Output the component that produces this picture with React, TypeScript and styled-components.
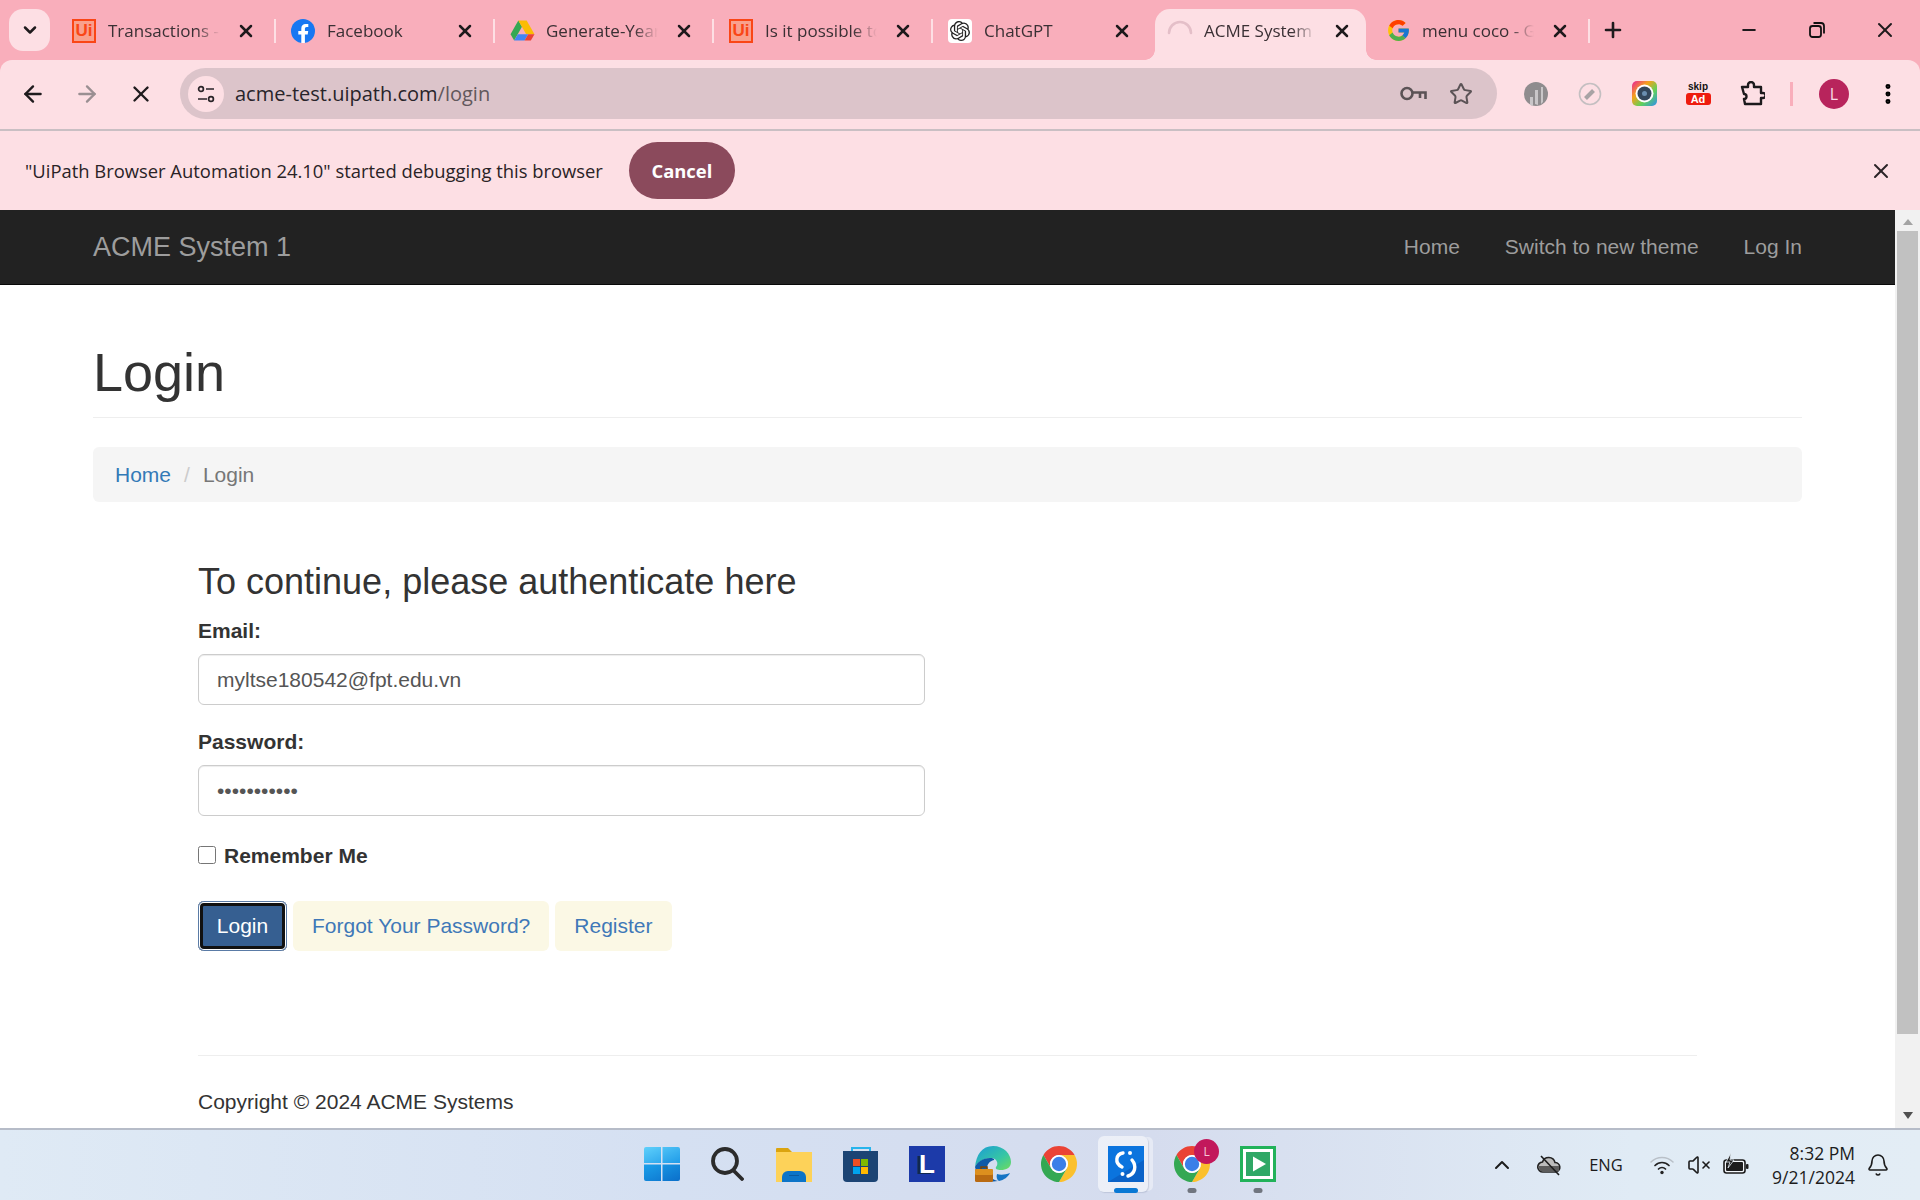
import React from "react";
import styled, { createGlobalStyle } from "styled-components";
import { ArrowLeft, ArrowRight, Bell, ChevronDown, ChevronUp, EllipsisVertical, Minus, Plus, Star, VolumeX, X } from "lucide-react";
import { FcGoogle } from "react-icons/fc";
import { SiOpenai } from "react-icons/si";

const GlobalStyle = createGlobalStyle`
  html, body {
    margin: 0;
    padding: 0;
    background: #fff;
  }
  * {
    box-sizing: border-box;
  }
`;

const UI_FONT = `"Open Sans", "Noto Sans", sans-serif`;
const PAGE_FONT = `"Liberation Sans", Arial, sans-serif`;

function ChromeLogo({ size }: { size: number }) {
  return (
    <svg width={size} height={size} viewBox="4 4 40 40">
      <path fill="#ea4335" d="M6.68 14A20 20 0 0 1 41.32 14H24A10 10 0 0 0 15.34 29Z" />
      <path fill="#fbc02d" d="M24 14H41.32A20 20 0 0 1 24 44L32.66 29A10 10 0 0 0 24 14Z" />
      <path fill="#34a853" d="M6.68 14A20 20 0 0 0 24 44L32.66 29A10 10 0 0 1 15.34 29Z" />
      <circle cx="24" cy="24" r="10" fill="#fff" />
      <circle cx="24" cy="24" r="8" fill="#3b7fe8" />
    </svg>
  );
}

function FacebookLogo() {
  return (
    <svg width="24" height="24" viewBox="0 0 24 24">
      <circle cx="12" cy="12" r="12" fill="#1877f2" />
      <path fill="#fff" d="M16.7 15.4l.5-3.4h-3.3V9.8c0-.9.5-1.8 1.900-1.800h1.500V5.100s-1.300-.2-2.600-.2c-2.700 0-4.400 1.600-4.400 4.600V12h-3v3.400h3V24h3.600v-8.600z" />
    </svg>
  );
}

function DriveLogo() {
  return (
    <svg width="25" height="24" viewBox="0 0 24 22">
      <path fill="#34a853" d="M8 1 0.5 14l3.500 6L11.500 7z" />
      <path fill="#fbbc04" d="M8 1h8l7.500 13h-8z" />
      <path fill="#4285f4" d="M4 20h10l3.500-6H7.500z" />
      <path fill="#ea4335" d="M14 20h6l3.500-6h-6z" />
    </svg>
  );
}

function Spinner() {
  return (
    <svg width="26" height="26" viewBox="0 0 26 26" fill="none">
      <path d="M2 15A11 11 0 0 1 24 15" stroke="#e4bfc8" strokeWidth="2.600" strokeLinecap="round" />
    </svg>
  );
}

const UiBadge = styled.div`
  width: 24px;
  height: 24px;
  border: 2px solid #fa4616;
  background: #f9a08d;
  color: #fa4616;
  font: 700 17px/20px ${PAGE_FONT};
  text-align: center;
`;

const GptBadge = styled.div`
  width: 24px;
  height: 24px;
  border-radius: 4px;
  background: #fff;
  color: #222;
  display: flex;
  align-items: center;
  justify-content: center;
`;

const TABS: { title: string; icon: React.ReactNode; active?: boolean; sep?: boolean }[] = [
  { title: "Transactions -", icon: <UiBadge>Ui</UiBadge>, sep: true },
  { title: "Facebook", icon: <FacebookLogo />, sep: true },
  { title: "Generate-Year", icon: <DriveLogo />, sep: true },
  { title: "Is it possible to", icon: <UiBadge>Ui</UiBadge>, sep: true },
  { title: "ChatGPT", icon: <GptBadge><SiOpenai size={20} /></GptBadge> },
  { title: "ACME System", icon: <Spinner />, active: true },
  { title: "menu coco - G", icon: <FcGoogle size={25} />, sep: true },
];

const Screen = styled.div`
  width: 1920px;
  height: 1200px;
  display: flex;
  flex-direction: column;
  overflow: hidden;
  background: #f9aebb;
`;

const TabStrip = styled.div`
  height: 60px;
  flex: none;
  display: flex;
  color: #1e1a1c;
`;

const TabMenu = styled.div`
  width: 41px;
  height: 42px;
  margin: 9px 6px 0 9px;
  border-radius: 14px;
  background: #fddfe4;
  display: flex;
  align-items: center;
  justify-content: center;
`;

const Tab = styled.div<{ $active?: boolean; $sep?: boolean }>`
  position: relative;
  width: ${(p) => (p.$active ? 211 : 219)}px;
  height: 51px;
  margin: 9px ${(p) => (p.$active ? 4 : 0)}px 0;
  padding: 0 0 8px ${(p) => (p.$active ? 12 : 15)}px;
  display: flex;
  align-items: center;
  border-radius: 15px 15px 0 0;
  background: ${(p) => (p.$active ? "#fddfe4" : "transparent")};
  &::before {
    content: "";
    display: ${(p) => (p.$active ? "block" : "none")};
    position: absolute;
    left: -10px;
    right: -10px;
    bottom: 0;
    height: 10px;
    background:
      radial-gradient(circle at 0 0, transparent 9.5px, #fddfe4 10px) left / 10px 10px no-repeat,
      radial-gradient(circle at 100% 0, transparent 9.5px, #fddfe4 10px) right / 10px 10px no-repeat;
  }
  &::after {
    content: "";
    display: ${(p) => (p.$sep ? "block" : "none")};
    position: absolute;
    right: -1px;
    top: 10px;
    width: 2px;
    height: 24px;
    background: #fddfe4;
  }
`;

const TabIcon = styled.div`
  width: 26px;
  flex: none;
  display: flex;
  align-items: center;
  justify-content: center;
`;

const TabTitle = styled.div`
  width: 118px;
  margin-left: 11px;
  font: 400 17px/24px ${UI_FONT};
  white-space: nowrap;
  overflow: hidden;
  color: #3a3034;
  mask-image: linear-gradient(to right, #000 88px, transparent 112px);
`;

const TabClose = styled.div`
  width: 24px;
  margin-left: 8px;
  flex: none;
  display: flex;
  align-items: center;
  justify-content: center;
`;

const NewTab = styled.div`
  width: 48px;
  height: 44px;
  margin-top: 8px;
  display: flex;
  align-items: center;
  justify-content: center;
`;

const WindowButtons = styled.div`
  margin-left: auto;
  display: flex;
  padding-right: 1px;
`;

const WindowButton = styled.div`
  width: 68px;
  height: 60px;
  display: flex;
  align-items: center;
  justify-content: center;
`;

const Toolbar = styled.div`
  height: 71px;
  flex: none;
  display: flex;
  align-items: center;
  padding: 0 0 2px 6px;
  background: #fddfe4;
  border-radius: 12px 12px 0 0;
  border-bottom: 2px solid #c9bfc3;
`;

const NavButton = styled.div<{ $dim?: boolean }>`
  width: 54px;
  height: 54px;
  flex: none;
  display: flex;
  align-items: center;
  justify-content: center;
  color: ${(p) => (p.$dim ? "#9a8f92" : "#1f1b1d")};
`;

const Omnibox = styled.div`
  width: 1317px;
  height: 51px;
  margin: 0 12px;
  flex: none;
  display: flex;
  align-items: center;
  padding: 0 24px 0 8px;
  border-radius: 26px;
  background: #dcc4ca;
`;

const SiteInfo = styled.div`
  width: 36px;
  height: 36px;
  flex: none;
  border-radius: 50%;
  background: #fddfe4;
  display: flex;
  align-items: center;
  justify-content: center;
`;

const Url = styled.div`
  margin-left: 11px;
  font: 400 20px/28px ${UI_FONT};
  color: #28242a;
  span {
    color: #62585c;
  }
`;

const OmniIcons = styled.div`
  margin-left: auto;
  display: flex;
  align-items: center;
  gap: 22px;
  color: #5b5356;
`;

const ExtSlot = styled.div`
  width: 54px;
  height: 54px;
  flex: none;
  display: flex;
  align-items: center;
  justify-content: center;
`;

const ToolbarSep = styled.div`
  width: 3px;
  height: 24px;
  margin: 0 14px 0 11px;
  background: #f9aebb;
`;

const Avatar = styled.div`
  width: 30px;
  height: 30px;
  border-radius: 50%;
  background: #b8245c;
  color: #f8dbe5;
  font: 400 16px/30px ${UI_FONT};
  text-align: center;
`;

const SkipAd = styled.div`
  width: 25px;
  text-align: center;
  font: 900 10px/10px ${PAGE_FONT};
  color: #111;
  b {
    display: block;
    margin-top: 1px;
    border-radius: 3px;
    background: #ee1c0e;
    color: #fff;
    font-size: 11px;
    line-height: 12px;
  }
`;

const InfoBar = styled.div`
  height: 79px;
  flex: none;
  display: flex;
  align-items: center;
  padding: 0 27px 0 25px;
  background: #fddfe4;
  font: 400 18.4px/26px ${UI_FONT};
  color: #2a2326;
`;

const CancelButton = styled.div`
  width: 106px;
  height: 57px;
  margin-left: 26px;
  border-radius: 29px;
  background: #8b4a5c;
  color: #fff;
  font: 700 18.4px/57px ${UI_FONT};
  text-align: center;
`;

const InfoClose = styled.div`
  margin-left: auto;
  display: flex;
`;

const Viewport = styled.div`
  flex: 1;
  min-height: 0;
  display: flex;
  overflow: hidden;
  background: #fff;
`;

const Page = styled.div`
  flex: 1;
  min-width: 0;
  overflow: hidden;
  font: 400 21px/30px ${PAGE_FONT};
  color: #333;
`;

const Navbar = styled.div`
  height: 75px;
  padding: 0 93px;
  display: flex;
  align-items: center;
  justify-content: space-between;
  background: #222;
  border-bottom: 1px solid #080808;
  color: #9d9d9d;
`;

const Brand = styled.div`
  font-size: 27px;
`;

const NavLinks = styled.div`
  display: flex;
  gap: 45px;
`;

const Container = styled.div`
  padding: 0 93px;
`;

const PageHeader = styled.div`
  margin-top: 58px;
  padding-bottom: 15px;
  border-bottom: 1px solid #eee;
  font-size: 54px;
  line-height: 59px;
`;

const Breadcrumb = styled.div`
  height: 55px;
  margin-top: 29px;
  padding: 0 22px;
  display: flex;
  align-items: center;
  border-radius: 6px;
  background: #f5f5f5;
  color: #777;
  a {
    color: #337ab7;
  }
  i {
    margin: 0 13px;
    font-style: normal;
    color: #ccc;
  }
`;

const FormArea = styled.div`
  padding: 0 105px;
`;

const FormTitle = styled.div`
  margin-top: 60px;
  font-size: 36px;
  line-height: 40px;
`;

const FieldLabel = styled.label<{ $top: number }>`
  display: block;
  margin-top: ${(p) => p.$top}px;
  font-weight: 700;
`;

const TextField = styled.input`
  display: block;
  width: 727px;
  height: 51px;
  margin-top: 8px;
  padding: 0 18px;
  border: 1px solid #ccc;
  border-radius: 6px;
  background: #fff;
  outline: none;
  font: 400 21px ${PAGE_FONT};
  color: #555;
  box-shadow: inset 0 1px 1px rgba(0, 0, 0, 0.075);
`;

const RememberRow = styled.label`
  display: flex;
  align-items: center;
  margin-top: 25px;
  font-weight: 700;
`;

const CheckBox = styled.input`
  width: 18px;
  height: 18px;
  margin: -3px 8px 0 0;
`;

const Buttons = styled.div`
  display: flex;
  gap: 6px;
  margin-top: 30px;
`;

const PrimaryButton = styled.div`
  width: 89px;
  height: 50px;
  border-radius: 6px;
  background: #365f91;
  box-shadow: inset 0 0 0 1px #5a7ba6, inset 0 0 0 2px #fff, inset 0 0 0 5px #111;
  color: #fff;
  line-height: 50px;
  text-align: center;
`;

const LinkButton = styled.div`
  height: 50px;
  padding: 0 19px;
  border-radius: 6px;
  background: #fbf8e5;
  color: #3f78b8;
  line-height: 50px;
`;

const FooterRule = styled.div`
  margin-top: 104px;
  border-top: 1px solid #eee;
`;

const Copyright = styled.div`
  margin-top: 31px;
`;

const Scrollbar = styled.div`
  width: 25px;
  flex: none;
  display: flex;
  flex-direction: column;
  align-items: center;
  background: #f1f1f1;
`;

const ScrollArrow = styled.div<{ $down?: boolean }>`
  width: 0;
  height: 0;
  flex: none;
  margin: ${(p) => (p.$down ? "auto 0 9px" : "9px 0 6px")};
  border-left: 5.5px solid transparent;
  border-right: 5.5px solid transparent;
  ${(p) => (p.$down ? "border-top: 7px solid #505050;" : "border-bottom: 6px solid #a3a3a3;")}
`;

const ScrollThumb = styled.div`
  width: 21px;
  height: 803px;
  flex: none;
  background: #c1c1c1;
`;

const Taskbar = styled.div`
  height: 72px;
  flex: none;
  display: flex;
  align-items: center;
  position: relative;
  justify-content: center;
  padding-bottom: 2px;
  border-top: 2px solid #b6bcc8;
  background: linear-gradient(to right, #dfeaf5 0%, #d5e0f2 35%, #d5dcee 60%, #e0ebf5 85%, #e3edf5 100%);
`;

const TaskIcons = styled.div`
  display: flex;
`;

const TaskSlot = styled.div<{ $active?: boolean }>`
  position: relative;
  width: 66.3px;
  height: 66px;
  display: flex;
  align-items: center;
  justify-content: center;
  &::before {
    content: "";
    display: ${(p) => (p.$active ? "block" : "none")};
    position: absolute;
    left: 5px;
    top: 5px;
    width: 50px;
    height: 56px;
    border-radius: 6px;
    background: rgba(255, 255, 255, 0.55);
    box-shadow: 1px 1px 1px rgba(120, 130, 160, 0.25), 6px 0 0 -1px rgba(255, 255, 255, 0.4);
  }
  > * {
    position: relative;
  }
`;

const RunDot = styled.div<{ $active?: boolean }>`
  position: absolute !important;
  bottom: 4px;
  left: 50%;
  transform: translateX(-50%);
  width: ${(p) => (p.$active ? 24 : 9)}px;
  height: 5px;
  border-radius: 3px;
  background: ${(p) => (p.$active ? "#0a78d4" : "#70757f")};
`;

const ChromeBadge = styled.div`
  position: absolute !important;
  top: 8px;
  right: 6px;
  width: 25px;
  height: 25px;
  border-radius: 50%;
  background: #c2185b;
  color: #f6c6d8;
  font: 400 12px/25px ${UI_FONT};
  text-align: center;
`;

const LetterTile = styled.div`
  width: 36px;
  height: 36px;
  background: #1c3aa9;
  color: #fff;
  font: 700 26px/36px ${PAGE_FONT};
  text-align: center;
  text-shadow: -3px 1px 0 #10284f;
`;

const Tray = styled.div`
  position: absolute;
  right: 19px;
  top: 0;
  bottom: 0;
  display: flex;
  align-items: center;
  color: #1c1c1c;
`;

const TrayItem = styled.div<{ $w: number }>`
  width: ${(p) => p.$w}px;
  flex: none;
  display: flex;
  align-items: center;
  justify-content: center;
`;

const Lang = styled.div`
  font: 400 16.5px/22px ${UI_FONT};
`;

const Clock = styled.div`
  width: 97px;
  text-align: right;
  font: 400 17.5px/24px ${UI_FONT};
`;

function ExtCircle() {
  return (
    <svg width="24" height="24" viewBox="0 0 24 24">
      <circle cx="12" cy="12" r="12" fill="#8f8c8e" />
      <path fill="#c9c6c8" d="M6 23v-8h3v9zM11 22V8h3v15zM17 22V5h2v15z" />
    </svg>
  );
}

function ExtRuler() {
  return (
    <svg width="24" height="24" viewBox="0 0 24 24" fill="none">
      <circle cx="12" cy="12" r="10.500" stroke="#c4bfc1" strokeWidth="1.600" />
      <path d="M7.500 16.500l8-8" stroke="#a8a3a5" strokeWidth="4" />
    </svg>
  );
}

function ExtCamera() {
  return (
    <svg width="25" height="25" viewBox="0 0 25 25">
      <defs>
        <linearGradient id="rainbow" x1="0" y1="0" x2="1" y2="1">
          <stop offset="0" stopColor="#e81f9b" />
          <stop offset="0.35" stopColor="#f6a21a" />
          <stop offset="0.65" stopColor="#5fd15a" />
          <stop offset="1" stopColor="#2f8df0" />
        </linearGradient>
      </defs>
      <rect width="25" height="25" rx="5" fill="url(#rainbow)" />
      <circle cx="12.500" cy="12.500" r="9" fill="#fff" />
      <circle cx="12.500" cy="12.500" r="7" fill="#33475b" />
      <circle cx="12.500" cy="12.500" r="2.500" fill="#6a8fb0" />
    </svg>
  );
}

function PuzzleIcon() {
  return (
    <svg width="26" height="26" viewBox="0 0 26 26" fill="none" stroke="#1c1a1c" strokeWidth="2.400" strokeLinejoin="round">
      <path d="M3 6h6V4a3 3 0 0 1 6 0v2h7v6h2a2.500 2.500 0 0 1 0 5h-2v6H6l-1-5a2.500 2.500 0 0 0 0-5z" />
    </svg>
  );
}

function KeyIcon() {
  return (
    <svg width="27" height="15" viewBox="0 0 27 15" fill="none" stroke="#5b5356" strokeWidth="2.600">
      <circle cx="7" cy="7.500" r="5.500" />
      <path d="M12.500 6.500H25.500V13M20 7v5" />
    </svg>
  );
}

function SiteTune() {
  return (
    <svg width="20" height="20" viewBox="0 0 20 20" fill="none" stroke="#2a2428" strokeWidth="1.700">
      <circle cx="5" cy="5" r="2.400" />
      <path d="M10 5h8M2 15h9" />
      <circle cx="15" cy="15" r="2.400" />
    </svg>
  );
}

function RestoreIcon() {
  return (
    <svg width="16" height="16" viewBox="0 0 16 16" fill="none" stroke="#111" strokeWidth="1.800">
      <rect x="1" y="4" width="11" height="11" rx="2.500" />
      <path d="M4.500 1H12a3 3 0 0 1 3 3v7.500" />
    </svg>
  );
}

function WindowsLogo() {
  return (
    <svg width="36" height="36" viewBox="0 0 36 36">
      <defs>
        <linearGradient id="winA" x1="0" y1="0" x2="1" y2="1">
          <stop offset="0" stopColor="#5fd0fb" />
          <stop offset="1" stopColor="#1f9be8" />
        </linearGradient>
        <linearGradient id="winB" x1="0" y1="0" x2="1" y2="1">
          <stop offset="0" stopColor="#1ba0ea" />
          <stop offset="1" stopColor="#0b6fca" />
        </linearGradient>
      </defs>
      <path fill="url(#winA)" d="M2 1h15v16H0V3a2 2 0 0 1 2-2zM18.500 1H34a2 2 0 0 1 2 2v14H18.500z" />
      <path fill="url(#winB)" d="M0 18.500h17V35H2a2 2 0 0 1-2-2zM18.500 18.500H36V33a2 2 0 0 1-2 2H18.500z" />
    </svg>
  );
}

function SearchGlyph() {
  return (
    <svg width="33" height="34" viewBox="0 0 33 34" fill="none" stroke="#2b2b2b" strokeWidth="3.800" strokeLinecap="round">
      <circle cx="14" cy="14" r="12" />
      <path d="M23 24l8 8" />
    </svg>
  );
}

function FolderIcon() {
  return (
    <svg width="36" height="35" viewBox="0 0 36 35">
      <path fill="#dba40f" d="M0 2a1 1 0 0 1 1-1h11l4 4h20v6H0z" />
      <path fill="#fdd259" d="M0 5h36v30H0z" />
      <path fill="#0c74c8" d="M6 35v-5a6 6 0 0 1 6-6h12a6 6 0 0 1 6 6v5z" />
      <path fill="#0a5aa0" d="M13 28h10v1H13z" />
    </svg>
  );
}

function StoreIcon() {
  return (
    <svg width="35" height="35" viewBox="0 0 35 35">
      <path d="M9 6V1h18v5" fill="none" stroke="#27b4ec" strokeWidth="2" />
      <path d="M0 4h35v27a4 4 0 0 1-4 4H4a4 4 0 0 1-4-4z" fill="#1c4474" />
      <rect x="10" y="12" width="7" height="7" fill="#ef4f23" />
      <rect x="18" y="12" width="7" height="7" fill="#7fba00" />
      <rect x="10" y="20" width="7" height="7" fill="#00a4ef" />
      <rect x="18" y="20" width="7" height="7" fill="#ffb900" />
    </svg>
  );
}

function EdgeIcon() {
  return (
    <svg width="36" height="36" viewBox="0 0 36 36">
      <defs>
        <linearGradient id="edgeArc" x1="0" y1="0" x2="1" y2="1">
          <stop offset="0" stopColor="#1a9bd7" />
          <stop offset="0.6" stopColor="#36c6a4" />
          <stop offset="1" stopColor="#6fdc5c" />
        </linearGradient>
      </defs>
      <path fill="url(#edgeArc)" d="M18 0c11 0 18 8 18 16 0 6-5 8-10 8-4 0-6-1-5-3 3-3 1-9-5-9C9 12 2 16 0 21 1 9 7 0 18 0z" />
      <path fill="#0f5aa8" d="M0 21c2-5 8-9 15-9 3 0 5 1 4 2-5 1-8 6-7 11 1 5 6 9 11 10C12 37 2 32 0 21z" />
      <path fill="#1574c4" d="M24 35c5-1 9-4 11-8-5 2-10 2-13 1-1 3 0 6 2 7z" />
      <rect y="23" width="18" height="13" rx="1.500" fill="#b96a12" />
      <rect y="23" width="18" height="6" rx="1.500" fill="#dc8f1e" />
      <path d="M6 23v-2h6v2" fill="none" stroke="#7a4408" strokeWidth="1.600" />
    </svg>
  );
}

function StudioIcon() {
  return (
    <svg width="36" height="36" viewBox="0 0 36 36">
      <rect width="36" height="36" fill="#0b74de" />
      <path d="M0 36 36 14v22z" fill="#0a62c8" />
      <path d="M15 7C8 8 6 17 14 21" fill="none" stroke="#fff" strokeWidth="3.400" strokeLinecap="round" />
      <path d="M24 14c5 6 3 14-4 16" fill="none" stroke="#fff" strokeWidth="3.400" strokeLinecap="round" />
      <circle cx="22" cy="7" r="2" fill="#fff" />
      <circle cx="14.500" cy="28" r="2" fill="#fff" />
    </svg>
  );
}

function PlayerIcon() {
  return (
    <svg width="36" height="36" viewBox="0 0 36 36">
      <rect width="36" height="36" fill="#22b25a" />
      <rect x="4.500" y="4.500" width="27" height="27" fill="#2fa866" stroke="#fff" strokeWidth="3" />
      <path d="M13 10.500l13 7.500-13 7.500z" fill="#fff" />
    </svg>
  );
}

function CloudSlash() {
  return (
    <svg width="26" height="24" viewBox="0 0 26 24" fill="none">
      <path d="M7 19a5 5 0 0 1-.5-10A6.500 6.500 0 0 1 19 9.500 4.800 4.800 0 0 1 20 19z" fill="#bcbcbc" stroke="#222" strokeWidth="1.600" />
      <path d="M3 13h20v5l-3 1H7a5 5 0 0 1-4-6z" fill="#5c5c5c" />
      <path d="M5 3l18 19" stroke="#1c1c1c" strokeWidth="1.600" />
    </svg>
  );
}

function WifiIcon() {
  return (
    <svg width="26" height="20" viewBox="0 0 26 20" fill="none" strokeLinecap="round">
      <path d="M2 7C8 1 18 1 24 7" stroke="#b9c0c8" strokeWidth="1.500" />
      <path d="M6 10.500c4-4 10-4 14 0" stroke="#222" strokeWidth="1.700" />
      <path d="M9.500 14c2-2 5-2 7 0" stroke="#222" strokeWidth="1.700" />
      <circle cx="13" cy="17.500" r="1.700" fill="#222" />
    </svg>
  );
}

function BatteryIcon() {
  return (
    <svg width="26" height="24" viewBox="0 0 26 24" fill="none">
      <rect x="1" y="7" width="21" height="13" rx="2.500" fill="#f3f6fa" stroke="#1c1c1c" strokeWidth="1.600" />
      <rect x="3" y="9" width="17" height="9" rx="1" fill="#1c1c1c" />
      <rect x="23" y="11" width="2.500" height="5" rx="1" fill="#1c1c1c" />
      <path d="M8 0 3 9h4l-2 6 6-8H7z" fill="#1c1c1c" stroke="#e6eff6" strokeWidth="0.800" />
    </svg>
  );
}

export default function App() {
  return (
    <Screen>
      <GlobalStyle />
      <TabStrip>
        <TabMenu>
          <ChevronDown size={20} strokeWidth={3} />
        </TabMenu>
        {TABS.map((tab) => (
          <Tab key={tab.title} $active={tab.active} $sep={tab.sep}>
            <TabIcon>{tab.icon}</TabIcon>
            <TabTitle>{tab.title}</TabTitle>
            <TabClose>
              <X size={20} strokeWidth={3} />
            </TabClose>
          </Tab>
        ))}
        <NewTab>
          <Plus size={24} strokeWidth={2.6} />
        </NewTab>
        <WindowButtons>
          <WindowButton>
            <Minus size={20} strokeWidth={2.4} />
          </WindowButton>
          <WindowButton>
            <RestoreIcon />
          </WindowButton>
          <WindowButton>
            <X size={24} strokeWidth={2} />
          </WindowButton>
        </WindowButtons>
      </TabStrip>

      <Toolbar>
        <NavButton>
          <ArrowLeft size={26} strokeWidth={2.2} />
        </NavButton>
        <NavButton $dim>
          <ArrowRight size={26} strokeWidth={2.2} />
        </NavButton>
        <NavButton>
          <X size={26} strokeWidth={2.2} />
        </NavButton>
        <Omnibox>
          <SiteInfo>
            <SiteTune />
          </SiteInfo>
          <Url>
            acme-test.uipath.com<span>/login</span>
          </Url>
          <OmniIcons>
            <KeyIcon />
            <Star size={24} strokeWidth={2} />
          </OmniIcons>
        </Omnibox>
        <ExtSlot>
          <ExtCircle />
        </ExtSlot>
        <ExtSlot>
          <ExtRuler />
        </ExtSlot>
        <ExtSlot>
          <ExtCamera />
        </ExtSlot>
        <ExtSlot>
          <SkipAd>
            skip<b>Ad</b>
          </SkipAd>
        </ExtSlot>
        <ExtSlot>
          <PuzzleIcon />
        </ExtSlot>
        <ToolbarSep />
        <ExtSlot>
          <Avatar>L</Avatar>
        </ExtSlot>
        <ExtSlot>
          <EllipsisVertical size={26} strokeWidth={2.6} />
        </ExtSlot>
      </Toolbar>

      <InfoBar>
        "UiPath Browser Automation 24.10" started debugging this browser
        <CancelButton>Cancel</CancelButton>
        <InfoClose>
          <X size={24} strokeWidth={2} />
        </InfoClose>
      </InfoBar>

      <Viewport>
        <Page>
          <Navbar>
            <Brand>ACME System 1</Brand>
            <NavLinks>
              <span>Home</span>
              <span>Switch to new theme</span>
              <span>Log In</span>
            </NavLinks>
          </Navbar>
          <Container>
            <PageHeader>Login</PageHeader>
            <Breadcrumb>
              <a>Home</a>
              <i>/</i>
              <span>Login</span>
            </Breadcrumb>
            <FormArea>
              <FormTitle>To continue, please authenticate here</FormTitle>
              <FieldLabel $top={14}>Email:</FieldLabel>
              <TextField type="text" value="myltse180542@fpt.edu.vn" readOnly />
              <FieldLabel $top={22}>Password:</FieldLabel>
              <TextField type="password" value="12345678901" readOnly />
              <RememberRow>
                <CheckBox type="checkbox" readOnly />
                Remember Me
              </RememberRow>
              <Buttons>
                <PrimaryButton>Login</PrimaryButton>
                <LinkButton>Forgot Your Password?</LinkButton>
                <LinkButton>Register</LinkButton>
              </Buttons>
              <FooterRule />
              <Copyright>Copyright © 2024 ACME Systems</Copyright>
            </FormArea>
          </Container>
        </Page>
        <Scrollbar>
          <ScrollArrow />
          <ScrollThumb />
          <ScrollArrow $down />
        </Scrollbar>
      </Viewport>

      <Taskbar>
        <TaskIcons>
          <TaskSlot><WindowsLogo /></TaskSlot>
          <TaskSlot><SearchGlyph /></TaskSlot>
          <TaskSlot><FolderIcon /></TaskSlot>
          <TaskSlot><StoreIcon /></TaskSlot>
          <TaskSlot><LetterTile>L</LetterTile></TaskSlot>
          <TaskSlot><EdgeIcon /></TaskSlot>
          <TaskSlot><ChromeLogo size={36} /></TaskSlot>
          <TaskSlot $active>
            <StudioIcon />
            <RunDot $active />
          </TaskSlot>
          <TaskSlot>
            <ChromeLogo size={36} />
            <ChromeBadge>L</ChromeBadge>
            <RunDot />
          </TaskSlot>
          <TaskSlot>
            <PlayerIcon />
            <RunDot />
          </TaskSlot>
        </TaskIcons>
        <Tray>
          <TrayItem $w={49}><ChevronUp size={24} strokeWidth={2} /></TrayItem>
          <TrayItem $w={46}><CloudSlash /></TrayItem>
          <TrayItem $w={68}><Lang>ENG</Lang></TrayItem>
          <TrayItem $w={44}><WifiIcon /></TrayItem>
          <TrayItem $w={30}><VolumeX size={24} strokeWidth={1.6} /></TrayItem>
          <TrayItem $w={44}><BatteryIcon /></TrayItem>
          <Clock>
            8:32 PM
            <br />
            9/21/2024
          </Clock>
          <TrayItem $w={46}><Bell size={24} strokeWidth={1.6} /></TrayItem>
        </Tray>
      </Taskbar>
    </Screen>
  );
}
